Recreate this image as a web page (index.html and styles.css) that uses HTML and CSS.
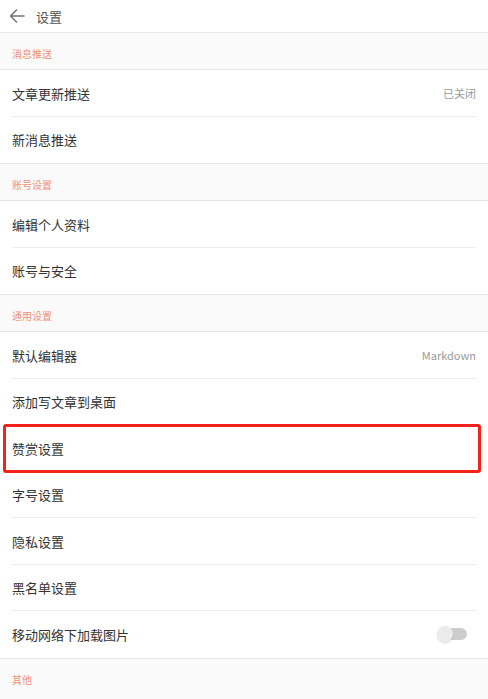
FILE: index.html
```html
<!DOCTYPE html>
<html lang="zh-CN">
<head>
    <meta charset="UTF-8">
    <meta name="viewport" content="width=device-width, initial-scale=1.0">
    <title>设置</title>
    <link rel="stylesheet" href="styles.css">
</head>
<body>

    <!-- top bar -->
    <div class="topbar">
        <svg class="back-icon" width="16" height="14" viewBox="0 0 16 14">
            <path d="M1.5 7 H15 M7.5 1 L1.5 7 L7.5 13" fill="none" stroke="#777" stroke-width="1.6" stroke-linecap="round" stroke-linejoin="round"/>
        </svg>
        <span class="title">设置</span>
    </div>

    <div class="section">消息推送</div>
    <div class="group">
        <div class="row"><span>文章更新推送</span><span class="value">已关闭</span></div>
        <div class="row"><span>新消息推送</span></div>
    </div>

    <div class="section">账号设置</div>
    <div class="group">
        <div class="row"><span>编辑个人资料</span></div>
        <div class="row"><span>账号与安全</span></div>
    </div>

    <div class="section">通用设置</div>
    <div class="group">
        <div class="row"><span>默认编辑器</span><span class="value">Markdown</span></div>
        <div class="row"><span>添加写文章到桌面</span></div>
        <div class="row highlighted"><span>赞赏设置</span><span class="marker"></span></div>
        <div class="row"><span>字号设置</span></div>
        <div class="row"><span>隐私设置</span></div>
        <div class="row"><span>黑名单设置</span></div>
        <div class="row"><span>移动网络下加载图片</span><span class="toggle"><span class="knob"></span></span></div>
    </div>

    <div class="section last">其他</div>

</body>
</html>
```

FILE: styles.css
```css
body {
    margin: 0;
    padding: 0;
    background: #fff;
    font-family: "Noto Sans CJK SC", "Noto Sans", sans-serif;
    color: #333;
    overflow: hidden;
}

/* top bar */
.topbar {
    height: 32px;
    display: flex;
    align-items: center;
    padding-left: 9px;
    box-sizing: border-box;
}

.back-icon {
    display: block;
}

.title {
    margin-left: 11px;
    font-size: 13px;
    color: #555;
}

/* section labels */
.section {
    height: 38px;
    box-sizing: border-box;
    border-top: 1px solid #e6e6e6;
    border-bottom: 1px solid #e6e6e6;
    background: #fafafa;
    padding: 10px 12px 0;
    font-size: 10px;
    line-height: 22px;
    color: #f09079;
}

.section.last {
    height: 60px;
    border-bottom: none;
}

/* rows */
.row {
    position: relative;
    height: 46.5px;
    display: flex;
    align-items: center;
    justify-content: space-between;
    padding: 0 12px;
    font-size: 13px;
}

.row:not(:last-child)::after {
    content: "";
    position: absolute;
    left: 12px;
    right: 12px;
    bottom: 0;
    height: 1px;
    background: #ececec;
}

.value {
    font-size: 11px;
    color: #9a9a9a;
}

/* red marker box drawn over the row */
.marker {
    position: absolute;
    top: -1px;
    left: 3px;
    right: 7px;
    bottom: -1px;
    border: 3px solid #f5211b;
    border-radius: 3px;
    z-index: 1;
    background: transparent;
}

.highlighted::after {
    display: none;
}

/* switch */
.toggle {
    position: relative;
    width: 30px;
    height: 12px;
    margin-right: 9px;
}

.toggle::before {
    content: "";
    position: absolute;
    left: 8px;
    right: 0;
    top: 0;
    bottom: 0;
    background: #cdcdcd;
    border-radius: 6px;
}

.knob {
    position: absolute;
    left: 0;
    top: -2px;
    width: 16px;
    height: 16px;
    border-radius: 50%;
    background: #ececec;
    box-shadow: 0 1px 2px rgba(0, 0, 0, 0.15);
}
```
